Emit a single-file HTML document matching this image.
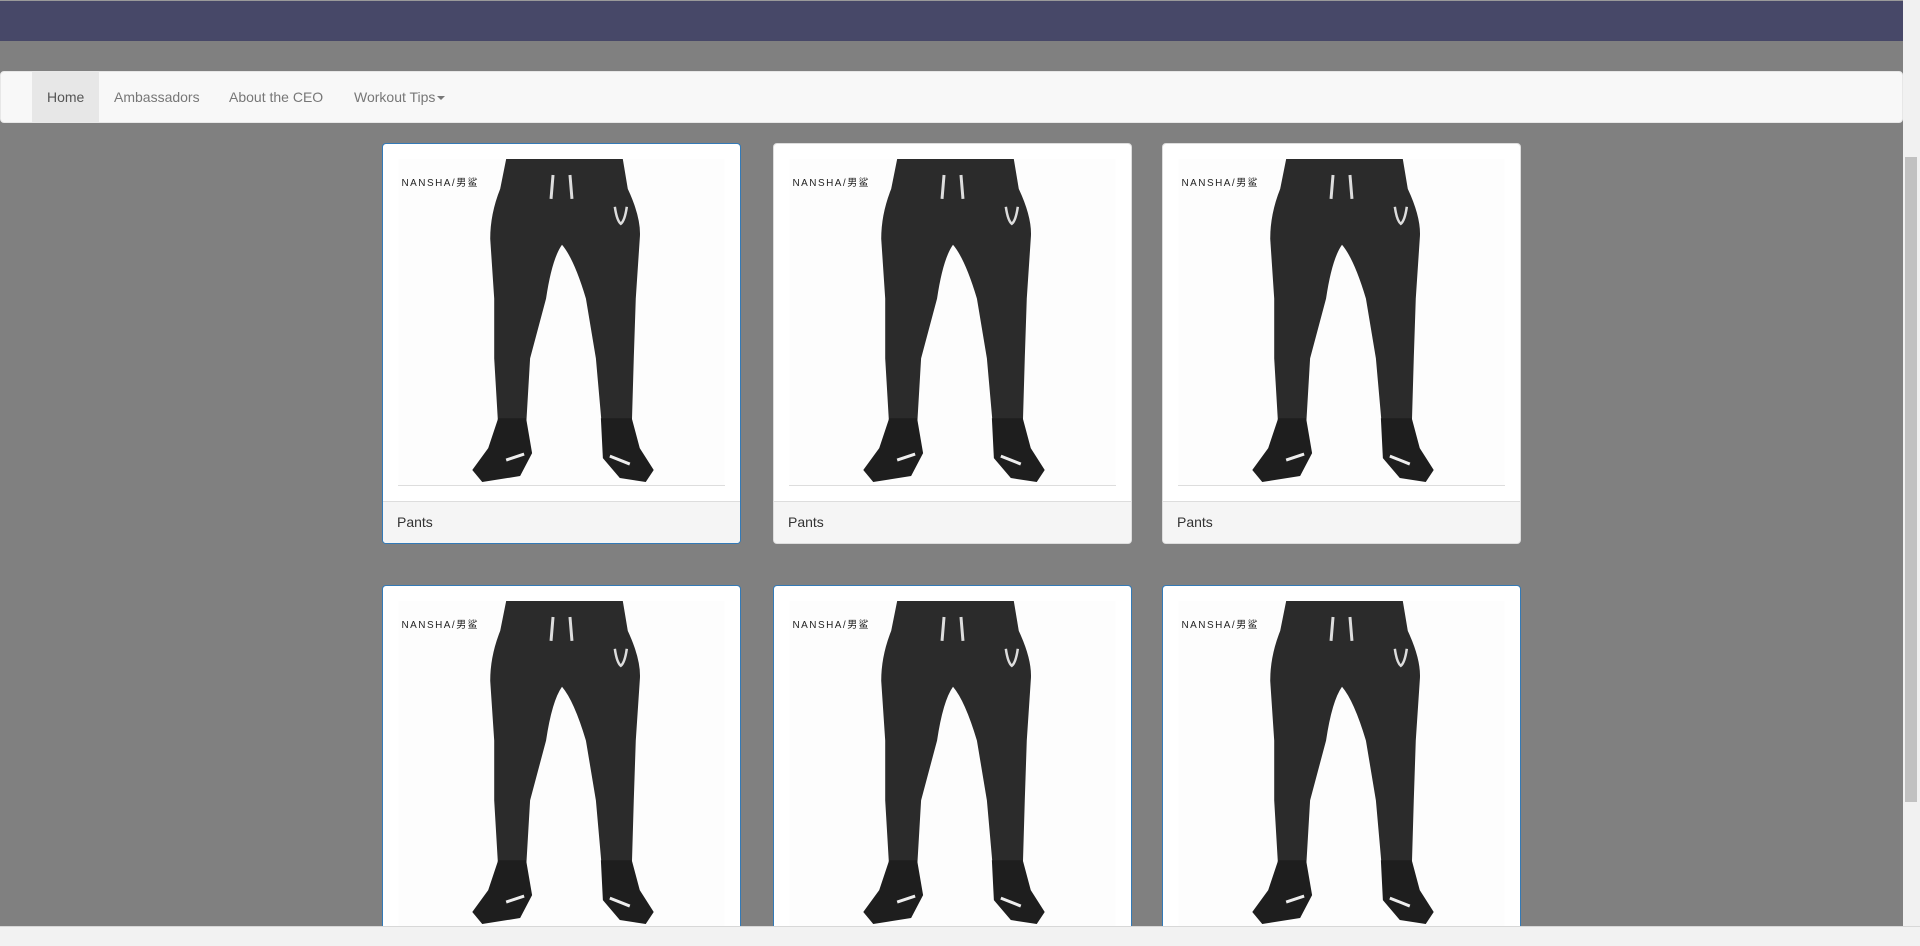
<!DOCTYPE html>
<html style="overflow:hidden;width:1920px;height:946px"><head><meta charset="utf-8"><style>
*{box-sizing:border-box;margin:0;padding:0}
body{width:1920px;height:946px;overflow:hidden;background:#808080;font-family:"Liberation Sans",Arial,sans-serif;font-size:14px;position:relative}
.top{position:absolute;left:0;top:0;width:1903px;height:41px;background:#474868;border-top:1px solid #9a9a9a}
.nav{position:absolute;left:0;top:71px;width:1903px;height:52px;background:#f8f8f8;border:1px solid #e7e7e7;border-radius:4px}
.nav a{position:absolute;top:0;height:50px;line-height:50px;color:#777;text-decoration:none;padding:0 15px}
.nav a.act{background:#e7e7e7;color:#555}
.caret{display:inline-block;width:0;height:0;border-left:4px solid transparent;border-right:4px solid transparent;border-top:4px solid #777;vertical-align:middle;margin-left:2px}
.card{position:absolute;width:359px;background:#fff;border:1px solid #337ab7;border-radius:4px;overflow:hidden}
.card.g{border-color:#ddd}
.img{position:absolute;left:15px;top:15px;width:327px;height:327px;border-bottom:1px solid #ddd}
.ft{position:absolute;left:0;top:357px;width:100%;height:44px;background:#f5f5f5;border-top:1px solid #ddd;padding:12px 14px;color:#333}
.clip{position:absolute;left:0;top:0;width:1920px;height:926px;overflow:hidden}
.sb{position:absolute;left:1903px;top:0;width:17px;height:926px;background:#f1f1f1}
.th{position:absolute;left:1905px;top:157px;width:12px;height:645px;background:#c1c1c1}
.bot{position:absolute;left:0;top:926px;width:1920px;height:20px;background:#f2f2f2;border-top:1px solid #d8d8d8}
</style></head><body>
<svg width="0" height="0" style="position:absolute"><defs>
<g id="p">
<rect width="327" height="327" fill="#fdfdfd"/>
<path d="M108 0 L225 0 L230 30 Q244 60 242 80 L238 140 L236 200 L234 268 L204 268 L198 200 L188 140 Q176 100 164 86 Q154 100 148 140 L132 200 L128 268 L100 268 L96 200 L96 140 L92 80 Q92 55 102 30 Z" fill="#2b2b2b"/>
<path d="M100 260 L128 260 L134 295 L122 318 L84 324 L74 312 L90 290 Z" fill="#1e1e1e"/>
<path d="M203 260 L234 260 L242 290 L256 312 L248 324 L222 320 L205 300 Z" fill="#1e1e1e"/>
<path d="M155 16 L153 40 M172 16 L174 40" stroke="#ddd" stroke-width="3"/>
<path d="M217 48 Q219 62 223 65 Q227 62 229 48" stroke="#ddd" stroke-width="2.5" fill="none"/>
<path d="M108 302 L126 296 M212 298 L232 306" stroke="#eee" stroke-width="3"/>
</g></defs></svg>
<div class="clip">
<div class="top"></div>
<div class="nav">
<a class="act" style="left:31px">Home</a>
<a style="left:98px">Ambassadors</a>
<a style="left:213px">About the CEO</a>
<a style="left:338px">Workout Tips<span class="caret"></span></a>
</div>
<div class="card" style="left:382px;top:143px;height:401px"><svg class="img" viewBox="0 0 327 327"><use href="#p"/><text x="3" y="27" font-size="10" font-family="Liberation Sans,Noto Sans CJK SC,sans-serif" fill="#222" letter-spacing="1.5">NANSHA/男鲨</text></svg><div class="ft">Pants</div></div>
<div class="card g" style="left:773px;top:143px;height:401px"><svg class="img" viewBox="0 0 327 327"><use href="#p"/><text x="3" y="27" font-size="10" font-family="Liberation Sans,Noto Sans CJK SC,sans-serif" fill="#222" letter-spacing="1.5">NANSHA/男鲨</text></svg><div class="ft">Pants</div></div>
<div class="card g" style="left:1162px;top:143px;height:401px"><svg class="img" viewBox="0 0 327 327"><use href="#p"/><text x="3" y="27" font-size="10" font-family="Liberation Sans,Noto Sans CJK SC,sans-serif" fill="#222" letter-spacing="1.5">NANSHA/男鲨</text></svg><div class="ft">Pants</div></div>
<div class="card" style="left:382px;top:585px;height:401px"><svg class="img" viewBox="0 0 327 327"><use href="#p"/><text x="3" y="27" font-size="10" font-family="Liberation Sans,Noto Sans CJK SC,sans-serif" fill="#222" letter-spacing="1.5">NANSHA/男鲨</text></svg><div class="ft">Pants</div></div>
<div class="card" style="left:773px;top:585px;height:401px"><svg class="img" viewBox="0 0 327 327"><use href="#p"/><text x="3" y="27" font-size="10" font-family="Liberation Sans,Noto Sans CJK SC,sans-serif" fill="#222" letter-spacing="1.5">NANSHA/男鲨</text></svg><div class="ft">Pants</div></div>
<div class="card" style="left:1162px;top:585px;height:401px"><svg class="img" viewBox="0 0 327 327"><use href="#p"/><text x="3" y="27" font-size="10" font-family="Liberation Sans,Noto Sans CJK SC,sans-serif" fill="#222" letter-spacing="1.5">NANSHA/男鲨</text></svg><div class="ft">Pants</div></div>
<div class="sb"></div><div class="th"></div>
</div>
<div class="bot"></div>
</body></html>
